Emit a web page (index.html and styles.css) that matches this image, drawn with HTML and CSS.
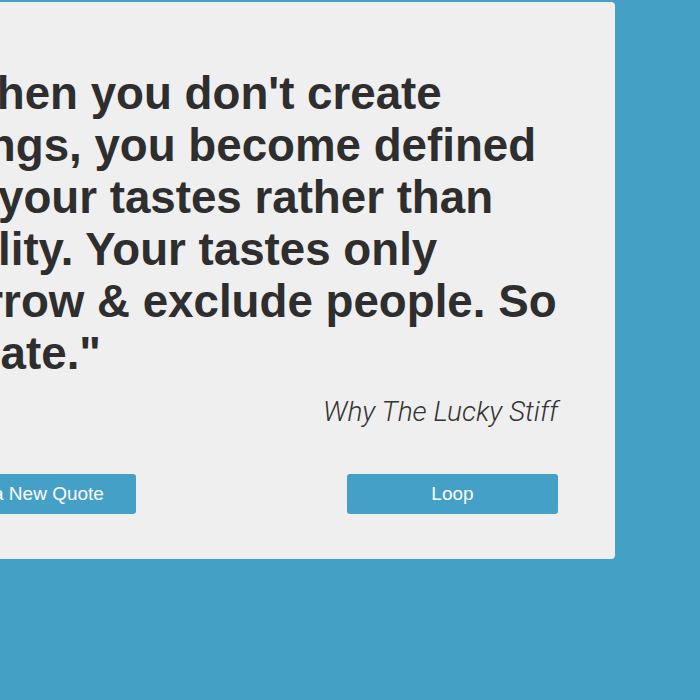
FILE: index.html
```html
<!DOCTYPE html>
<html lang="en">
<head>
<meta charset="utf-8">
<title>Random Quote</title>
<link rel="stylesheet" href="styles.css">
</head>
<body>
<main class="page">
  <section class="card">
    <blockquote class="quote">
      <p class="quote-text">"When you don't create<br>things, you become defined<br>by your tastes rather than<br>ability. Your tastes only<br>narrow &amp; exclude people. So<br>create."</p>
      <footer class="quote-author">Why The Lucky Stiff</footer>
    </blockquote>
    <div class="actions">
      <button class="btn" type="button">Get a New Quote</button>
      <span class="spacer"></span>
      <button class="btn" type="button">Loop</button>
    </div>
  </section>
</main>
</body>
</html>
```

FILE: styles.css
```css
html, body {
  margin: 0;
  padding: 0;
  height: 100%;
}

body {
  background: #45a0c6;
  overflow: hidden;
}

.page {
  padding-top: 2px;
}

.card {
  box-sizing: border-box;
  width: 747px;
  margin-left: -132px;
  padding: 66px 57px 45px 57px;
  background: #efefef;
  border-radius: 4px;
}

.quote {
  margin: 0;
}

.quote-text {
  margin: 0 0 16px 0;
  padding-left: 7px;
  font-family: "Liberation Sans", Arial, sans-serif;
  font-weight: 700;
  font-size: 45.7px;
  line-height: 52px;
  color: #2e2e2e;
  white-space: nowrap;
}

.quote-author {
  text-align: right;
  font-family: Roboto, "Liberation Sans", sans-serif;
  font-weight: 300;
  font-style: italic;
  font-size: 28px;
  line-height: 32px;
  color: #333333;
}

.actions {
  display: grid;
  grid-template-columns: 211px 211px 211px;
  margin-top: 46px;
}

.btn {
  height: 40px;
  border: 0;
  border-radius: 3px;
  background: #44a0c7;
  color: #ffffff;
  font-family: "Liberation Sans", Arial, sans-serif;
  font-size: 19px;
  white-space: nowrap;
  padding: 0;
}
```
